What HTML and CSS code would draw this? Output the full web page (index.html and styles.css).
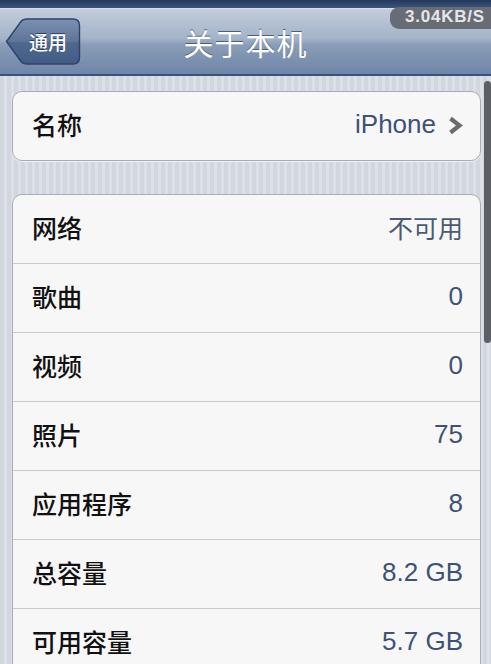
FILE: index.html
```html
<!DOCTYPE html>
<html lang="zh-CN">
<head>
<meta charset="utf-8">
<title>关于本机</title>
<link rel="stylesheet" href="styles.css">
</head>
<body>
<div class="screen">
  <div class="statusbar"></div>
  <header class="navbar">
    <div class="back">
      <svg class="back-shape" width="76" height="47" viewBox="0 0 76 47">
        <defs>
          <linearGradient id="bg" x1="0" y1="0" x2="0" y2="1">
            <stop offset="0" stop-color="#7b91b3"/>
            <stop offset="0.5" stop-color="#5d7599"/>
            <stop offset="0.52" stop-color="#4f688e"/>
            <stop offset="1" stop-color="#425c85"/>
          </linearGradient>
        </defs>
        <path d="M1.5 23.5 L16 3.5 Q18 1 22 1 L68 1 Q74.5 1 74.5 7.5 L74.5 39.5 Q74.5 46 68 46 L22 46 Q18 46 16 43.5 Z" fill="url(#bg)" stroke="#2f4366" stroke-width="1.4"/>
      </svg>
      <span class="back-label">通用</span>
    </div>
    <h1 class="title">关于本机</h1>
  </header>
  <div class="speed">3.04KB/S</div>
  <main class="content">
    <section class="card">
      <div class="row">
        <span class="label">名称</span>
        <span class="value">iPhone
          <svg class="chev" width="15" height="19" viewBox="0 0 15 19"><path d="M2.5 2.5 L11.5 9.5 L2.5 16.5" fill="none" stroke="#6b6b6b" stroke-width="4.2" stroke-linejoin="miter"/></svg>
        </span>
      </div>
    </section>
    <section class="card">
      <div class="row"><span class="label">网络</span><span class="value cjk">不可用</span></div>
      <div class="row"><span class="label">歌曲</span><span class="value">0</span></div>
      <div class="row"><span class="label">视频</span><span class="value">0</span></div>
      <div class="row"><span class="label">照片</span><span class="value">75</span></div>
      <div class="row"><span class="label">应用程序</span><span class="value">8</span></div>
      <div class="row"><span class="label">总容量</span><span class="value">8.2 GB</span></div>
      <div class="row"><span class="label">可用容量</span><span class="value">5.7 GB</span></div>
    </section>
    <div class="scrollbar"></div>
  </main>
</div>
</body>
</html>
```
FILE: styles.css
```css
html, body {
  margin: 0;
  padding: 0;
}
body {
  width: 491px;
  height: 664px;
  overflow: hidden;
  font-family: "Noto Sans CJK SC", "Liberation Sans", sans-serif;
  background: #d6dbe2;
}
.screen {
  position: relative;
  width: 491px;
  height: 664px;
  overflow: hidden;
}
.statusbar {
  height: 8px;
  background: linear-gradient(#23395c, #3c557c);
}
.speed {
  position: absolute;
  z-index: 5;
  top: 7px;
  right: -8px;
  height: 22px;
  padding: 0 14px 0 15px;
  border-radius: 9px;
  background: #686c74;
  color: #e4e6ea;
  font-family: "Liberation Sans", sans-serif;
  font-weight: bold;
  font-size: 17px;
  line-height: 20px;
  letter-spacing: 0.8px;
}
.navbar {
  height: 65px;
  display: flex;
  align-items: center;
  position: relative;
  background: linear-gradient(#c3cddb 0%, #a4b3c8 45%, #8a9db8 55%, #6e86a7 100%);
  border-top: 1px solid #d8dfe9;
  border-bottom: 2px solid #3d5276;
  padding-left: 5px;
}
.back {
  position: relative;
  width: 76px;
  height: 47px;
  display: flex;
  align-items: center;
  justify-content: center;
}
.back-shape {
  position: absolute;
  left: 0;
  top: 0;
}
.back-label {
  position: relative;
  margin-left: 10px;
  color: #fff;
  font-size: 19px;
  font-weight: 500;
  text-shadow: 0 -1px 0 #2c3e5e;
}
.title {
  position: absolute;
  left: 0;
  right: 0;
  top: 0;
  bottom: 0;
  margin: 0;
  display: flex;
  align-items: center;
  justify-content: center;
  color: #fff;
  font-size: 30px;
  font-weight: 400;
  letter-spacing: 1px;
  text-shadow: 0 -1px 0 #4a5f82;
  pointer-events: none;
}
.content {
  position: relative;
  padding: 15px 10px 0 12px;
  display: flex;
  flex-direction: column;
  gap: 33px;
  background: repeating-linear-gradient(90deg, #d2d7df 0px, #d2d7df 4px, #dce0e7 4px, #dce0e7 7px);
  min-height: 600px;
}
.card {
  background: #f7f7f7;
  border: 1px solid #a9adb3;
  border-radius: 10px;
  box-shadow: 0 1px 0 #eef0f3;
  overflow: hidden;
}
.row {
  height: 68px;
  box-sizing: border-box;
  padding: 0 17px 4px 19px;
  display: flex;
  align-items: center;
  justify-content: space-between;
}
.row + .row {
  height: 69px;
  border-top: 1px solid #c9cacc;
}
.label {
  font-size: 25px;
  color: #111;
  font-weight: 500;
}
.value {
  font-family: "Liberation Sans", sans-serif;
  font-size: 26px;
  color: #3f5275;
  display: flex;
  align-items: center;
}
.value.cjk {
  font-family: "Noto Sans CJK SC", sans-serif;
  font-size: 25px;
  font-weight: 400;
  color: #4a5a74;
}
.chev {
  margin-left: 12px;
  margin-top: 2px;
}
.scrollbar {
  position: absolute;
  right: 0;
  top: 5px;
  width: 7px;
  height: 262px;
  border-radius: 4px;
  background: #5c5f64;
}
```
